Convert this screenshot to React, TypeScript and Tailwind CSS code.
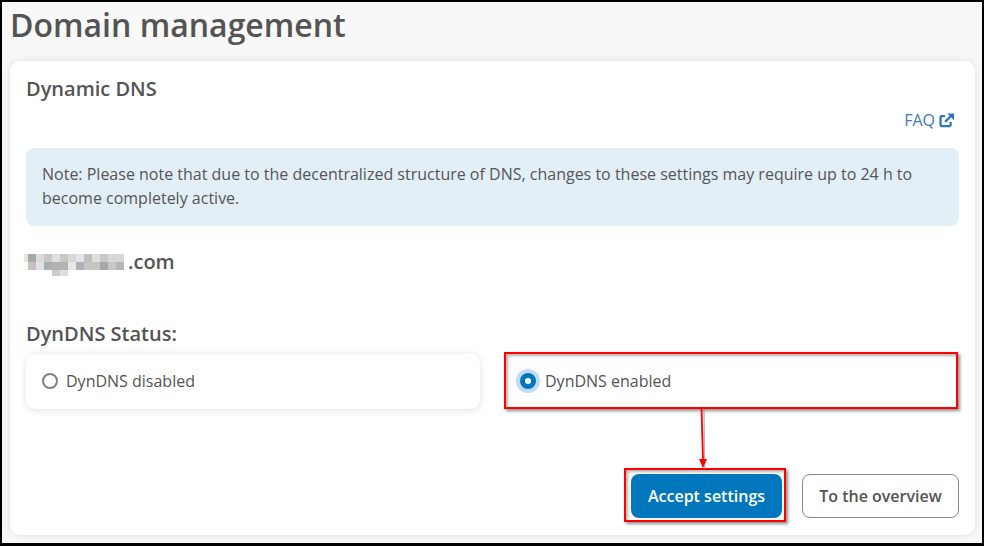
import React from "react";

const font = { fontFamily: '"Open Sans", sans-serif' };

function Pixelated() {
  const row1 = ["#a8a8a8", "#dcdcdc", "#c8c8c8", "#e0e0e0", "#c8c8c8", "#d8d8d4", "#e4e4ec", "#c0c0bc", "#dedede", "#c8c8cc", "#d8d8d8", "#d8d8d8"];
  const row2 = ["#c8c0c0", "#e0e0e6", "#a8b0b4", "#b4b0ae", "#b4b2b0", "#e8e8e8", "#b0aebc", "#c4c8c4", "#c8c4c0", "#a4a8b0", "#c4c8c0", "#b4b6bc"];
  return (
    <span className="flex flex-col w-[104px] h-[22px] mt-[8px] shrink-0">
      <span className="flex h-[8px]">
        <span className="w-[4px] bg-[#e8e6da]" />
        {row1.map((c, j) => (
          <span key={j} className="w-[8px]" style={{ background: c }} />
        ))}
      </span>
      <span className="flex h-[8px]">
        <span className="w-[4px] bg-[#fff8ec]" />
        {row2.map((c, j) => (
          <span key={j} className="w-[8px]" style={{ background: c }} />
        ))}
      </span>
      <span className="flex h-[6px] pl-[28px]">
        <span className="w-[8px] bg-[#cccccc]" />
        <span className="w-[8px] bg-[#dde0e2]" />
      </span>
    </span>
  );
}

export default function App() {
  return (
    <div
      style={font}
      className="relative w-[984px] h-[546px] overflow-hidden bg-[#f8f8f8] border-t-2 border-l-2 border-b-[3px] border-r-2 border-black text-[#545454] flex flex-col"
    >
      <h1 className="ml-[8px] h-[59px] pt-[1px] text-[32px] leading-[44px] font-semibold">Domain management</h1>

      <main className="ml-[8px] mr-[7px] h-[474px] rounded-[10px] bg-white shadow-[0_0_8px_rgba(0,0,0,0.1)] px-[16px] flex flex-col">
        <h2 className="mt-[14px] text-[20px] leading-[28px] font-semibold">Dynamic DNS</h2>

        <div className="mt-[5px] h-[24px] flex justify-end items-center gap-[4px] pr-[5px] text-[16px] text-[#3f78ba]">
          <span>FAQ</span>
          <svg viewBox="0 0 16 16" className="w-[15px] h-[15px]" fill="none" stroke="#2f75bb" strokeWidth="2.4">
            <path d="M6.5 3.2H2.8a1.2 1.2 0 0 0-1.2 1.2v8.4a1.2 1.2 0 0 0 1.2 1.2h8.4a1.2 1.2 0 0 0 1.2-1.2V9.5" />
            <path d="M6.5 9.5 13 3" />
            <path d="M8.8 0.5H16v7.2z" fill="#2f75bb" stroke="none" />
          </svg>
        </div>

        <div className="mt-[16px] h-[78px] rounded-[8px] bg-[#e3eff7] px-[16px] py-[14px] text-[16px] leading-[24px] text-[#555]">
          Note: Please note that due to the decentralized structure of DNS, changes to these settings may require up to 24 h to become completely active.
        </div>

        <div className="mt-[20px] h-[32px] -ml-[2px] flex items-start text-[20px] leading-[32px] font-semibold">
          <Pixelated />
          <span>.com</span>
        </div>

        <h3 className="mt-[42px] text-[20px] leading-[28px] font-semibold">DynDNS Status:</h3>

        <div className="mt-[6px] flex gap-[24px]">
          <label className="w-[454px] h-[55px] rounded-[10px] bg-white shadow-[0_1px_8px_rgba(0,0,0,0.12)] flex items-center pl-[16px] pb-[1px] gap-[8px] text-[16px]">
            <span className="w-[16px] h-[16px] rounded-full border-2 border-[#808080] bg-white" />
            DynDNS disabled
          </label>
          <label className="w-[455px] h-[55px] rounded-[10px] bg-white flex items-center pl-[16px] pb-[1px] gap-[9px] text-[16px]">
            <span className="w-[16px] h-[16px] rounded-full bg-white border-[5px] border-[#0077bd] shadow-[0_0_0_4px_#bfdbf8]" />
            DynDNS enabled
          </label>
        </div>

        <div className="mt-[65px] flex justify-end gap-[20px]">
          <button style={font} className="w-[151px] h-[44px] rounded-[8px] bg-[#0077bd] text-white text-[16px] font-semibold">Accept settings</button>
          <button style={font} className="w-[157px] h-[44px] rounded-[8px] bg-white border border-[#8a8a8a] text-[16px] font-semibold">To the overview</button>
        </div>
      </main>

      {/* red screenshot annotations */}
      <div className="absolute left-[502px] top-[350px] w-[454px] h-[57px] border-2 border-[#ff0000] shadow-[2px_2px_3px_rgba(0,0,0,0.45),inset_2px_2px_3px_rgba(0,0,0,0.3)]" />
      <div className="absolute left-[622px] top-[466px] w-[162px] h-[54px] border-2 border-[#ff0000] shadow-[2px_2px_3px_rgba(0,0,0,0.45),inset_2px_2px_3px_rgba(0,0,0,0.3)]" />
      <svg className="absolute left-[690px] top-[405px] w-[22px] h-[64px]" viewBox="0 0 22 64" fill="none">
        <path d="M10.5 1 11 61" stroke="#999" strokeWidth="1.5" transform="translate(1.5 1)" opacity="0.7" />
        <path d="M9.5 0.5 11 54" stroke="#ff0000" strokeWidth="1.8" />
        <path d="M7 52h8l-4 9z" fill="#ff0000" />
      </svg>
    </div>
  );
}
